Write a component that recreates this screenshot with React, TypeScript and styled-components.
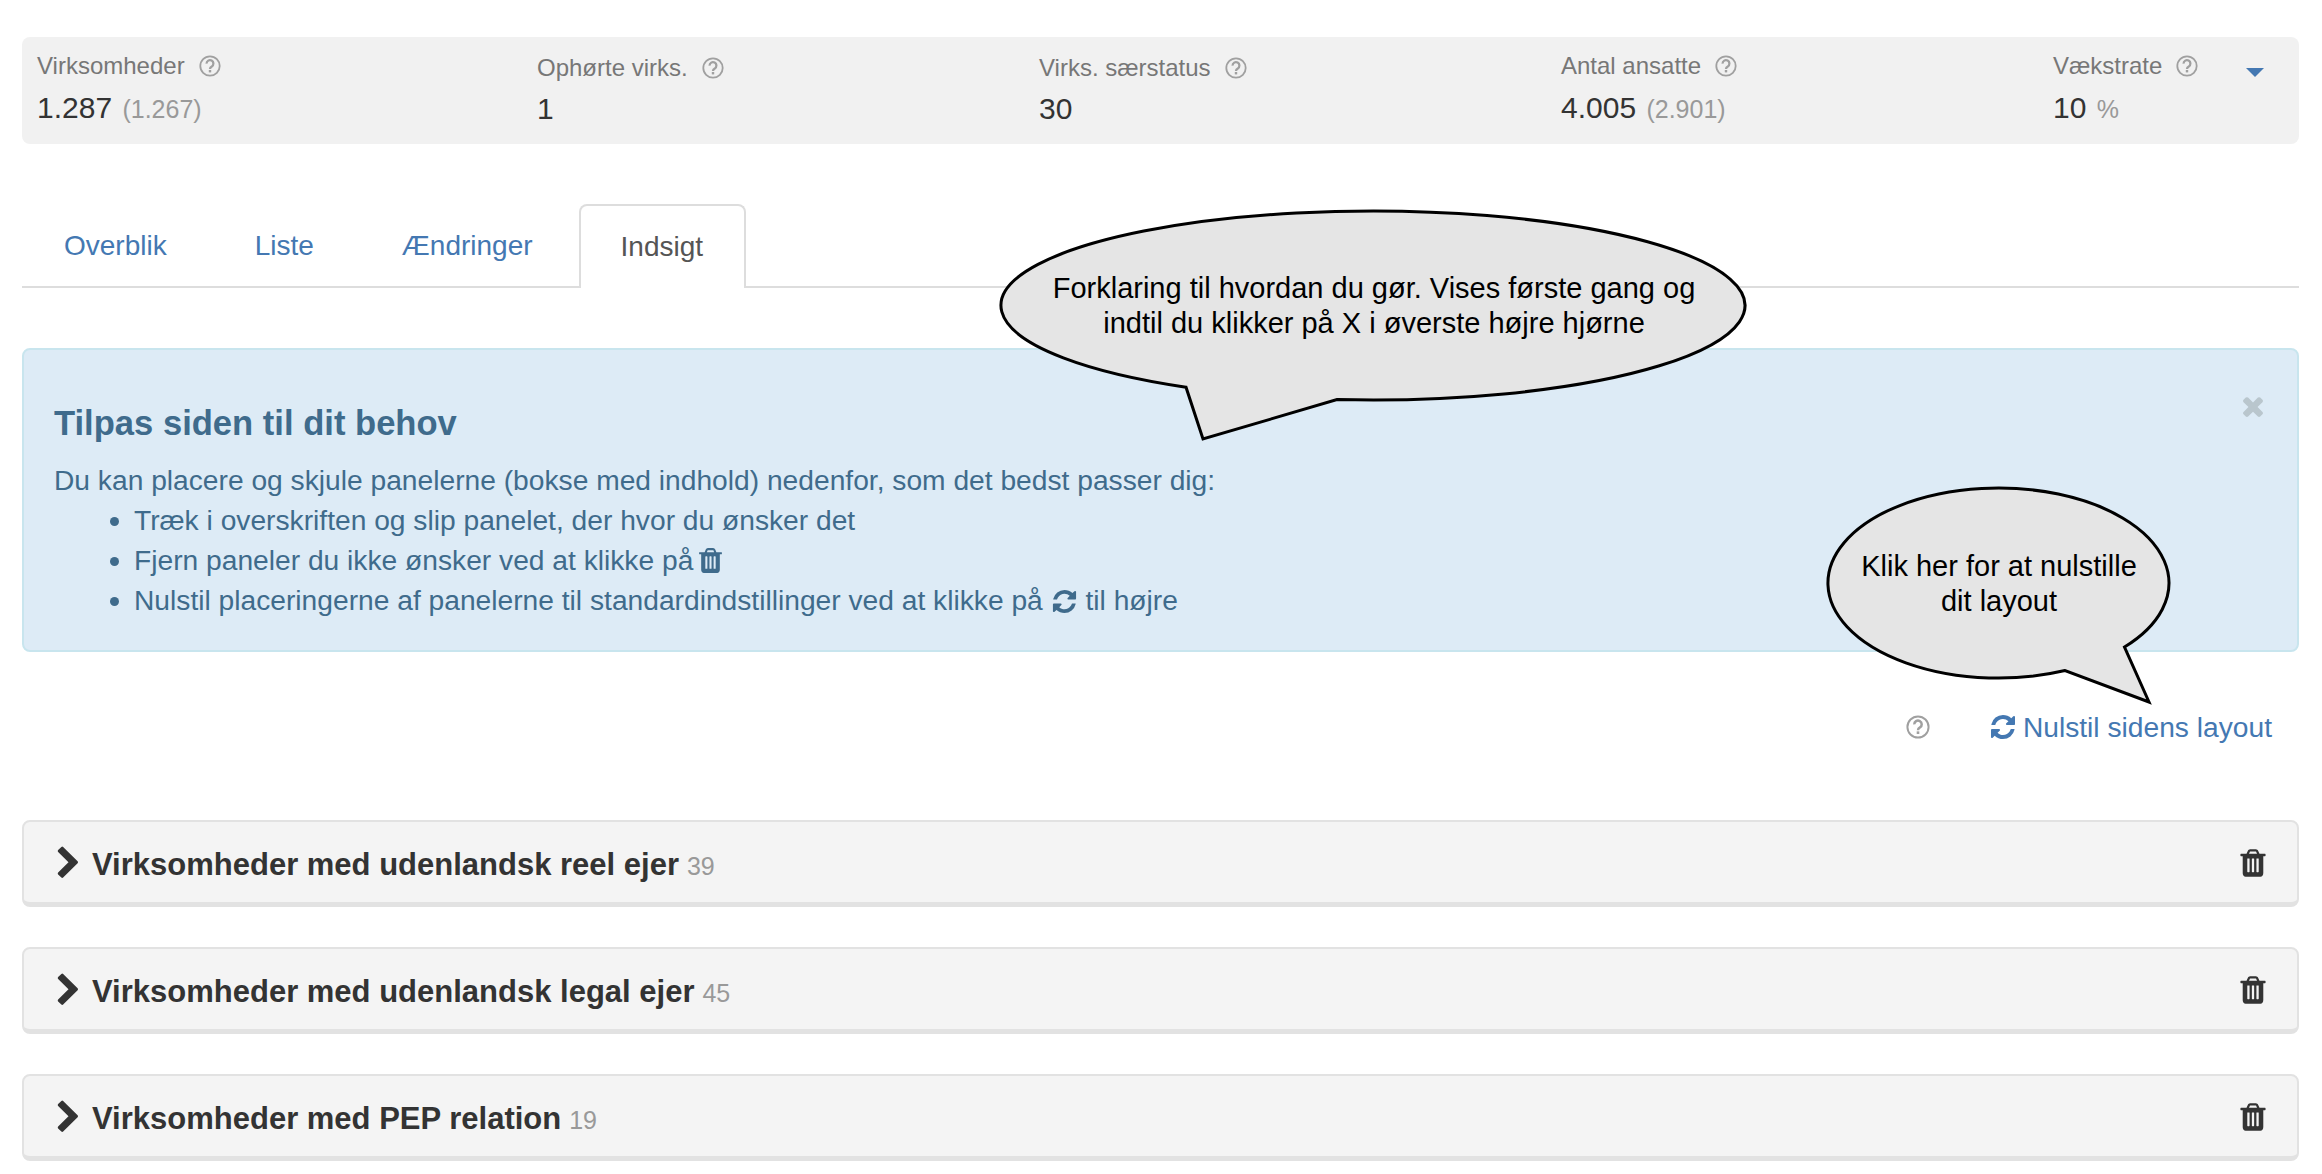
import React from "react";
import styled, { createGlobalStyle } from "styled-components";

const GlobalStyle = createGlobalStyle`
  body {
    margin: 0;
    background: #fff;
    font-family: "Liberation Sans", Arial, sans-serif;
  }
`;

const Page = styled.div`
  position: relative;
  padding: 37px 23px 12px 22px;
`;

const StatsBar = styled.div`
  display: grid;
  grid-template-columns: 500px 502px 522px 492px 1fr;
  height: 107px;
  padding: 15px 0 0 15px;
  box-sizing: border-box;
  background: #f1f1f1;
  border-radius: 8px;
  position: relative;
`;

const Stat = styled.div``;

const StatLabel = styled.div<{ $lower?: boolean }>`
  display: flex;
  align-items: center;
  gap: 14px;
  height: 28px;
  margin-top: ${(p) => (p.$lower ? "2px" : "0")};
  margin-bottom: ${(p) => (p.$lower ? "9px" : "10px")};
  font-size: 24px;
  color: #777;
`;

const StatValue = styled.div`
  font-size: 30px;
  line-height: 36px;
  color: #333;
`;

const Muted = styled.span`
  font-size: 25px;
  color: #999;
  margin-left: 2px;
`;

const Caret = styled.span`
  position: absolute;
  right: 35px;
  top: 31px;
  width: 0;
  height: 0;
  border-left: 9px solid transparent;
  border-right: 9px solid transparent;
  border-top: 9px solid #4478b2;
`;

const TabBar = styled.div`
  display: flex;
  gap: 4px;
  height: 82px;
  margin-top: 60px;
  border-bottom: 2px solid #ddd;
`;

const Tab = styled.div<{ $active?: boolean }>`
  display: flex;
  align-items: center;
  height: 84px;
  padding: 0 ${(p) => (p.$active ? "41px 0 40px" : "42px")};
  font-size: 28px;
  color: ${(p) => (p.$active ? "#555" : "#4478b2")};
  background: ${(p) => (p.$active ? "#fff" : "transparent")};
  box-sizing: border-box;
  border: ${(p) => (p.$active ? "2px solid #ddd" : "none")};
  border-bottom: none;
  border-radius: 8px 8px 0 0;
`;

const Alert = styled.div`
  position: relative;
  height: 304px;
  box-sizing: border-box;
  margin-top: 60px;
  padding: 51px 30px 0;
  background: #ddebf6;
  border: 2px solid #c8e5ee;
  border-radius: 8px;
  color: #3f6b8c;
  font-size: 28.2px;
  line-height: 40px;
`;

const AlertTitle = styled.h2`
  margin: 0 0 15px;
  font-size: 34.6px;
  line-height: 44px;
  font-weight: 700;
`;

const AlertList = styled.ul`
  margin: 0;
  padding: 0 0 0 80px;
`;

const InlineIcon = styled.span<{ $pull?: number }>`
  display: inline-flex;
  vertical-align: -5px;
  margin-left: ${(p) => p.$pull ?? 0}px;
`;

const CloseButton = styled.span`
  position: absolute;
  right: 29px;
  top: 41px;
  display: flex;
  color: #b9c6cd;
`;

const ResetRow = styled.div`
  display: flex;
  align-items: center;
  justify-content: flex-end;
  height: 40px;
  margin-top: 55px;
  padding-right: 27px;
  font-size: 28.2px;
  color: #4478b2;
`;

const ResetLink = styled.span`
  display: flex;
  align-items: center;
  gap: 6px;
  margin-left: 59px;
`;

const PanelList = styled.div`
  display: flex;
  flex-direction: column;
  gap: 40px;
  margin-top: 73px;
`;

const Panel = styled.div`
  display: flex;
  align-items: center;
  height: 87px;
  box-sizing: border-box;
  padding: 2px 28px 0 27px;
  background: #f4f4f4;
  border: 2px solid #e2e2e2;
  border-bottom-width: 5px;
  border-radius: 8px;
  color: #333;
`;

const PanelTitle = styled.div`
  flex: 1;
  margin-left: 6px;
  padding-top: 4px;
  font-size: 31px;
  font-weight: 700;
`;

const PanelCount = styled.span`
  font-size: 25px;
  font-weight: 400;
  color: #999;
  margin-left: 8px;
`;

const Callout = styled.div<{ $left: number; $top: number; $width: number; $height: number; $textTop: number }>`
  position: absolute;
  left: ${(p) => p.$left}px;
  top: ${(p) => p.$top}px;
  width: ${(p) => p.$width}px;
  height: ${(p) => p.$height}px;
  padding-top: ${(p) => p.$textTop}px;
  box-sizing: border-box;
  text-align: center;
  font-size: 29px;
  line-height: 35px;
  color: #000;

  svg {
    position: absolute;
    left: 0;
    top: 0;
    overflow: visible;
  }
  div {
    position: relative;
  }
`;

const FaIcon = ({ d, size }: { d: string; size: number }) => (
  <svg width={size} height={size} viewBox="0 0 1792 1792" fill="currentColor">
    <path d={d} />
  </svg>
);

const TRASH =
  "M704 1376v-704q0-14-9-23t-23-9h-64q-14 0-23 9t-9 23v704q0 14 9 23t23 9h64q14 0 23-9t9-23zm256 0v-704q0-14-9-23t-23-9h-64q-14 0-23 9t-9 23v704q0 14 9 23t23 9h64q14 0 23-9t9-23zm256 0v-704q0-14-9-23t-23-9h-64q-14 0-23 9t-9 23v704q0 14 9 23t23 9h64q14 0 23-9t9-23zm-544-992h448l-48-117q-7-9-17-11h-317q-10 2-17 11zm928 32v64q0 14-9 23t-23 9h-96v948q0 83-47 143.5t-113 60.5h-832q-66 0-113-58.5t-47-141.5v-952h-96q-14 0-23-9t-9-23v-64q0-14 9-23t23-9h309l70-167q15-37 54-63t79-26h320q40 0 79 26t54 63l70 167h309q14 0 23 9t9 23z";
const REFRESH =
  "M1639 1056q0 5-1 7-64 268-268 434.5t-478 166.5q-146 0-282.5-55t-243.5-157l-129 129q-19 19-45 19t-45-19-19-45v-448q0-26 19-45t45-19h448q26 0 45 19t19 45-19 45l-137 137q71 66 161 102t187 36q134 0 250-65t186-179q11-17 53-117 8-23 30-23h192q13 0 22.5 9.5t9.5 22.5zm25-800v448q0 26-19 45t-45 19h-448q-26 0-45-19t-19-45 19-45l138-138q-148-137-349-137-134 0-250 65t-186 179q-11 17-53 117-8 23-30 23h-199q-13 0-22.5-9.5t-9.5-22.5v-7q65-268 270-434.5t480-166.5q146 0 284 55.5t245 156.5l130-129q19-19 45-19t45 19 19 45z";
const CHEVRON =
  "M1363 877l-742 742q-19 19-45 19t-45-19l-166-166q-19-19-19-45t19-45l531-531-531-531q-19-19-19-45t19-45l166-166q19-19 45-19t45 19l742 742q19 19 19 45t-19 45z";
const TIMES =
  "M1490 1322q0 40-28 68l-136 136q-28 28-68 28t-68-28l-294-294-294 294q-28 28-68 28t-68-28l-136-136q-28-28-28-68t28-68l294-294-294-294q-28-28-28-68t28-68l136-136q28-28 68-28t68 28l294 294 294-294q28-28 68-28t68 28l136 136q28 28 28 68t-28 68l-294 294 294 294q28 28 28 68z";

const HelpIcon = ({ size = 22 }: { size?: number }) => (
  <svg width={size} height={size} viewBox="0 0 22 22" fill="none" stroke="#a0a0a0">
    <circle cx="11" cy="11" r="9.7" strokeWidth="1.8" />
    <path d="M7.6 8.6a3.4 3.4 0 1 1 5.2 2.8c-1.2.7-1.8 1.2-1.8 2.6" strokeWidth="2.3" />
    <rect x="9.8" y="15" width="2.4" height="2.4" fill="#a0a0a0" stroke="none" />
  </svg>
);

const stats = [
  { label: "Virksomheder", value: "1.287", extra: "(1.267)" },
  { label: "Ophørte virks.", value: "1", lower: true },
  { label: "Virks. særstatus", value: "30", lower: true },
  { label: "Antal ansatte", value: "4.005", extra: "(2.901)" },
  { label: "Vækstrate", value: "10", extra: "%" },
];

const panels = [
  { title: "Virksomheder med udenlandsk reel ejer", count: 39 },
  { title: "Virksomheder med udenlandsk legal ejer", count: 45 },
  { title: "Virksomheder med PEP relation", count: 19 },
];

const App = () => (
  <Page>
    <GlobalStyle />
    <StatsBar>
      {stats.map((s) => (
        <Stat key={s.label}>
          <StatLabel $lower={s.lower}>
            {s.label}
            <HelpIcon />
          </StatLabel>
          <StatValue>
            {s.value} {s.extra && <Muted>{s.extra}</Muted>}
          </StatValue>
        </Stat>
      ))}
      <Caret />
    </StatsBar>

    <TabBar>
      <Tab>Overblik</Tab>
      <Tab>Liste</Tab>
      <Tab>Ændringer</Tab>
      <Tab $active>Indsigt</Tab>
    </TabBar>

    <Alert>
      <AlertTitle>Tilpas siden til dit behov</AlertTitle>
      Du kan placere og skjule panelerne (bokse med indhold) nedenfor, som det bedst passer dig:
      <AlertList>
        <li>Træk i overskriften og slip panelet, der hvor du ønsker det</li>
        <li>
          Fjern paneler du ikke ønsker ved at klikke på{" "}
          <InlineIcon $pull={-5}>
            <FaIcon d={TRASH} size={29} />
          </InlineIcon>
        </li>
        <li>
          Nulstil placeringerne af panelerne til standardindstillinger ved at klikke på{" "}
          <InlineIcon>
            <FaIcon d={REFRESH} size={27} />
          </InlineIcon>{" "}
          til højre
        </li>
      </AlertList>
      <CloseButton>
        <FaIcon d={TIMES} size={30} />
      </CloseButton>
    </Alert>

    <ResetRow>
      <HelpIcon size={24} />
      <ResetLink>
        <FaIcon d={REFRESH} size={28} />
        Nulstil sidens layout
      </ResetLink>
    </ResetRow>

    <PanelList>
      {panels.map((p) => (
        <Panel key={p.title}>
          <FaIcon d={CHEVRON} size={35} />
          <PanelTitle>
            {p.title}
            <PanelCount>{p.count}</PanelCount>
          </PanelTitle>
          <FaIcon d={TRASH} size={32} />
        </Panel>
      ))}
    </PanelList>

    <Callout $left={1000} $top={210} $width={748} $height={232} $textTop={61}>
      <svg width="748" height="232" viewBox="0 0 748 232">
        <path
          d="M337 189.56 A372 94.5 0 1 0 186 177.2 L203 229 Z"
          fill="#e5e5e5"
          stroke="#000"
          strokeWidth="3"
        />
      </svg>
      <div>
        Forklaring til hvordan du gør. Vises første gang og
        <br />
        indtil du klikker på X i øverste højre hjørne
      </div>
    </Callout>

    <Callout $left={1826} $top={486} $width={346} $height={220} $textTop={63}>
      <svg width="346" height="220" viewBox="0 0 346 220">
        <path
          d="M298.5 161 A170.5 95 0 1 0 239 184.5 L323 216 Z"
          fill="#e5e5e5"
          stroke="#000"
          strokeWidth="3"
        />
      </svg>
      <div>
        Klik her for at nulstille
        <br />
        dit layout
      </div>
    </Callout>
  </Page>
);

export default App;
